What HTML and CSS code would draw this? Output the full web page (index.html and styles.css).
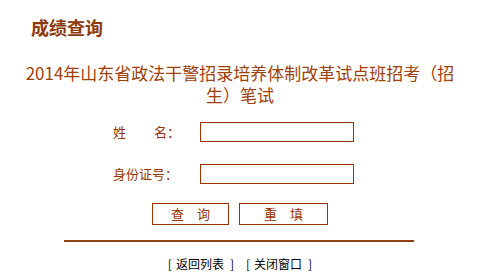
FILE: index.html
```html
<!DOCTYPE html>
<html lang="zh-CN">
<head>
<meta charset="utf-8">
<title>成绩查询</title>
<link rel="stylesheet" href="styles.css">
</head>
<body>
<div class="page">
  <h1 class="title">成绩查询</h1>
  <p class="exam">2014年山东省政法干警招录培养体制改革试点班招考（招生）笔试</p>
  <form class="form">
    <div class="row">
      <label class="label"><span>姓</span><span>名：</span></label>
      <input class="field" type="text">
    </div>
    <div class="row">
      <label class="label"><span>身份证号：</span></label>
      <input class="field" type="text">
    </div>
    <div class="buttons">
      <button type="button" class="btn btn-query">查　询</button>
      <button type="reset" class="btn btn-reset">重　填</button>
    </div>
  </form>
  <div class="rule"></div>
  <div class="links"><span class="link">[<a href="#">返回列表</a>]</span><span class="link">[<a href="#">关闭窗口</a>]</span></div>
</div>
</body>
</html>
```

FILE: styles.css
```css
html, body {
  margin: 0;
  padding: 0;
  background: #ffffff;
}
body {
  font-family: "Noto Sans CJK SC", "Liberation Sans", sans-serif;
  color: #993300;
}
.page {
  width: 480px;
  display: flex;
  flex-direction: column;
}
.title {
  margin: 14px 0 0 31px;
  font-size: 18px;
  line-height: 26px;
  font-weight: bold;
  color: #8b3a0f;
}
.exam {
  margin: 22px 0 0 20px;
  width: 440px;
  text-align: center;
  font-size: 17px;
  line-height: 22px;
  color: #a0400a;
}
.form {
  margin: 16px 0 0 0;
  display: flex;
  flex-direction: column;
}
.row {
  display: flex;
  align-items: center;
  height: 20px;
  margin-bottom: 22px;
  padding-left: 113px;
}
.label {
  width: 67px;
  margin-right: 20px;
  display: flex;
  justify-content: space-between;
  white-space: nowrap;
  font-size: 13px;
  line-height: 20px;
  color: #993300;
}
.field {
  box-sizing: border-box;
  width: 154px;
  height: 20px;
  margin: 0;
  padding: 0 2px;
  border: 1px solid #993300;
  background: #fff;
  outline: none;
}
.buttons {
  display: flex;
  justify-content: center;
  gap: 10px;
  margin-top: -3px;
  padding-left: 0;
}
.btn {
  box-sizing: border-box;
  height: 22px;
  margin: 0;
  padding: 0;
  border: 1px solid #993300;
  background: #fff;
  color: #993300;
  font-family: "Noto Sans CJK SC", sans-serif;
  font-size: 13px;
  line-height: 20px;
}
.btn-query { width: 77px; }
.btn-reset { width: 89px; }
.rule {
  margin: 15px 0 0 64px;
  width: 350px;
  height: 0;
  border-top: 2px solid #8b4513;
}
.links {
  margin-top: 15px;
  display: flex;
  justify-content: center;
  gap: 12px;
  font-size: 12px;
  line-height: 14px;
  color: #000;
}
.links a {
  color: #000;
  text-decoration: none;
  margin: 0 6px 0 4px;
}
```
